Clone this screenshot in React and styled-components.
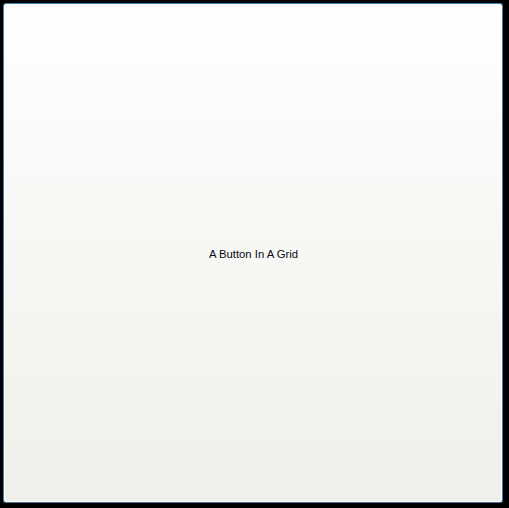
import React from "react";
import styled, { createGlobalStyle } from "styled-components";

const GlobalStyle = createGlobalStyle`
  html, body {
    margin: 0;
    padding: 0;
    background: #000;
  }
`;

const Grid = styled.div`
  display: grid;
  width: 509px;
  height: 508px;
  box-sizing: border-box;
  padding: 3px 6px 5px 3px;
  background: #000;
`;

const Button = styled.button`
  box-sizing: border-box;
  width: 100%;
  height: 100%;
  margin: 0;
  border: 1px solid #3c7fb1;
  border-bottom-color: #4a6d8f;
  border-radius: 3px;
  background: linear-gradient(to bottom, #ffffff 0%, #f9f9f7 35%, #efefeb 100%);
  box-shadow: inset 0 0 0 1px rgba(255, 255, 255, 0.9);
  font-family: "Liberation Sans", Arial, sans-serif;
  font-size: 11.3px;
  color: #0a0a14;
  cursor: pointer;
  display: flex;
  align-items: center;
  justify-content: center;
  padding: 1px 0 0 1px;
`;

export default function App() {
  return (
    <>
      <GlobalStyle />
      <Grid>
        <Button>A Button In A Grid</Button>
      </Grid>
    </>
  );
}
